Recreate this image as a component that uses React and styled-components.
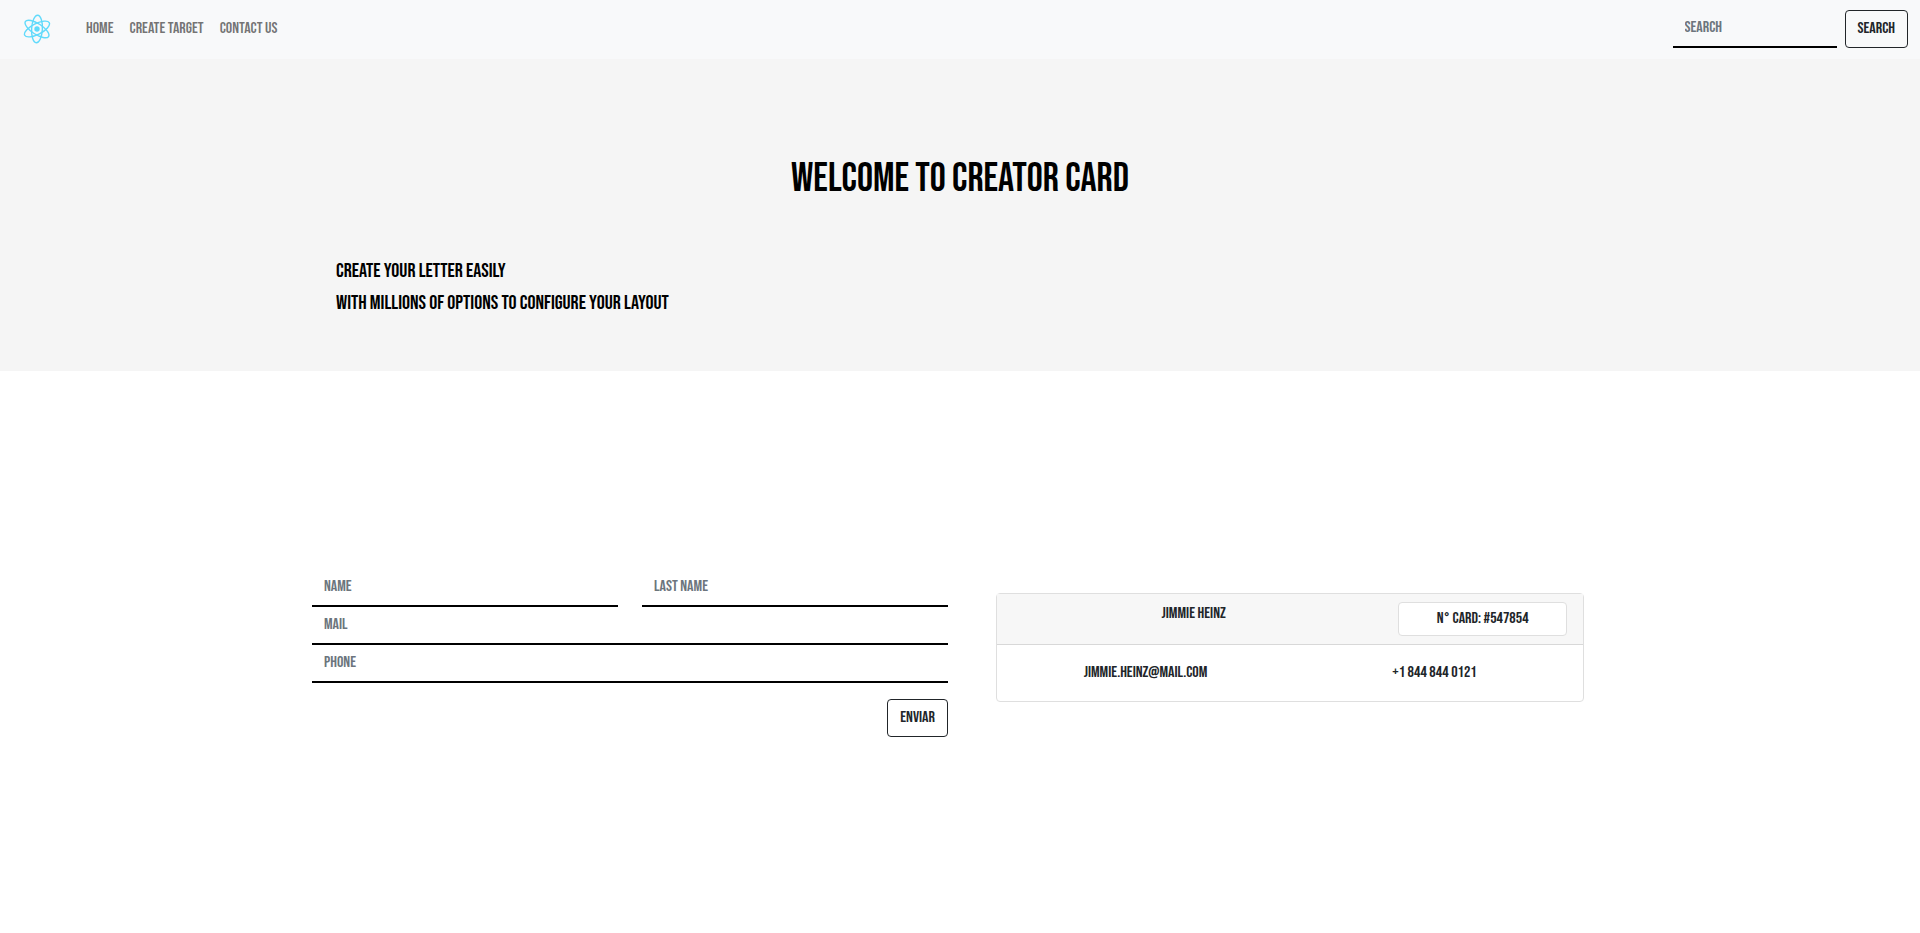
import React, { useState } from "react";
import styled, { createGlobalStyle } from "styled-components";

const GlobalStyle = createGlobalStyle`
  *, *::before, *::after { box-sizing: border-box; }
  body {
    margin: 0;
    background: #fff;
    color: #212529;
    font-family: "Bebas Neue", "Liberation Sans Narrow", "Liberation Sans", sans-serif;
    font-size: 16px;
    line-height: 24px;
  }
  h1, p, ul { margin: 0; padding: 0; font-weight: 400; }
`;

const Navbar = styled.nav`
  display: flex;
  align-items: center;
  padding: 9px 12px 10px;
  background: #f8f9fa;
`;

const Brand = styled.a`
  display: flex;
  padding: 0 11px;
  margin-right: 16px;
`;

const NavList = styled.ul`
  display: flex;
  flex: 1;
  list-style: none;
`;

const NavLink = styled.a`
  display: block;
  padding: 8px;
  color: rgba(0, 0, 0, 0.55);
  text-decoration: none;
`;

const SearchForm = styled.form`
  display: flex;
  gap: 8px;
`;

const TextInput = styled.input`
  display: block;
  width: ${(p) => p.$width || "100%"};
  height: 38px;
  padding: 5px 12px 7px;
  border: 0;
  border-bottom: 2px solid #000;
  border-radius: 0;
  background: transparent;
  color: #212529;
  font: inherit;
  outline: 0;
  &::placeholder { color: #6c757d; opacity: 1; }
`;

const Button = styled.button`
  padding: 6px 12px;
  border: 1px solid #212529;
  border-radius: 4px;
  background: transparent;
  color: #212529;
  font: inherit;
  cursor: pointer;
`;

const Hero = styled.header`
  padding: 96px 0 48px;
  background: #f5f5f5;
  color: #000;
`;

const Container = styled.div`
  width: 100%;
  max-width: 1320px;
  margin: 0 auto;
`;

const Title = styled.h1`
  margin-bottom: 56px;
  font-size: 40px;
  line-height: 48px;
  text-align: center;
`;

const Lead = styled.p`
  padding: 0 36px;
  margin-bottom: 8px;
  font-size: 20px;
`;

const Content = styled(Container)`
  display: grid;
  grid-template-columns: 1fr 1fr;
  margin-top: 198px;
`;

const CardForm = styled.form`
  display: flex;
  flex-direction: column;
  padding: 0 12px;
`;

const FieldRow = styled.div`
  display: grid;
  grid-template-columns: 1fr 1fr;
  gap: 24px;
`;

const Actions = styled.div`
  display: flex;
  justify-content: flex-end;
  margin-top: 16px;
`;

const Card = styled.section`
  align-self: start;
  margin: 24px 36px 0;
  border: 1px solid #dfdfdf;
  border-radius: 4px;
  text-align: center;
`;

const CardHeader = styled.div`
  display: grid;
  grid-template-columns: 2fr 1fr;
  padding: 8px 4px;
  border-bottom: 1px solid #d8d8d8;
  background: #f7f7f7;
`;

const CardNumber = styled.p`
  margin: 0 12px;
  padding: 4px;
  border: 1px solid #dfdfdf;
  border-radius: 4px;
  background: #fff;
`;

const CardBody = styled.div`
  display: grid;
  grid-template-columns: 1fr 1fr;
  padding: 16px 4px;
`;

function AtomLogo() {
  return (
    <svg width="28" height="30" viewBox="-14 -15 28 30" fill="none" stroke="#61dafb" strokeWidth="1.4" aria-hidden="true">
      <g transform="rotate(3)">
        <ellipse rx="5.4" ry="13.8" />
        <ellipse rx="5.4" ry="13.8" transform="rotate(60)" />
        <ellipse rx="5.4" ry="13.8" transform="rotate(120)" />
      </g>
      <circle r="2.7" fill="#61dafb" stroke="none" />
    </svg>
  );
}

const links = ["HOME", "CREATE TARGET", "CONTACT US"];

export default function App() {
  const [values, setValues] = useState({ name: "", last: "", mail: "", phone: "" });
  const field = (key, label, type = "text") => (
    <TextInput
      type={type}
      name={key}
      placeholder={label}
      aria-label={label}
      value={values[key]}
      onChange={(e) => setValues({ ...values, [key]: e.target.value })}
    />
  );
  const stop = (e) => e.preventDefault();

  return (
    <>
      <GlobalStyle />
      <Navbar>
        <Brand href="#" aria-label="Creator card"><AtomLogo /></Brand>
        <NavList>
          {links.map((label) => (
            <li key={label}><NavLink href="#">{label}</NavLink></li>
          ))}
        </NavList>
        <SearchForm role="search" onSubmit={stop}>
          <TextInput type="search" placeholder="SEARCH" aria-label="Search" $width="164px" />
          <Button type="submit">SEARCH</Button>
        </SearchForm>
      </Navbar>
      <Hero>
        <Container>
          <Title>WELCOME TO CREATOR CARD</Title>
          <Lead>CREATE YOUR LETTER EASILY</Lead>
          <Lead>WITH MILLIONS OF OPTIONS TO CONFIGURE YOUR LAYOUT</Lead>
        </Container>
      </Hero>
      <Content as="main">
        <CardForm onSubmit={stop}>
          <FieldRow>
            {field("name", "NAME")}
            {field("last", "LAST NAME")}
          </FieldRow>
          {field("mail", "MAIL", "email")}
          {field("phone", "PHONE", "tel")}
          <Actions><Button type="submit">ENVIAR</Button></Actions>
        </CardForm>
        <Card>
          <CardHeader>
            <p>JIMMIE HEINZ</p>
            <CardNumber>N° CARD: #547854</CardNumber>
          </CardHeader>
          <CardBody>
            <p>JIMMIE.HEINZ@MAIL.COM</p>
            <p>+1 844 844 0121</p>
          </CardBody>
        </Card>
      </Content>
    </>
  );
}
